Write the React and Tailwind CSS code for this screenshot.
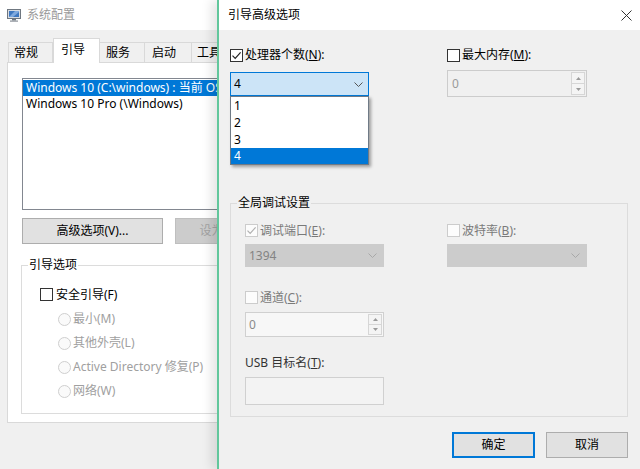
import React from "react";

function Check({ checked, disabled }) {
	return (
		<span
			className={
				disabled
					? "w-[13px] h-[13px] shrink-0 border border-[#cccccc] bg-[#fcfcfc] flex items-center justify-center"
					: "w-[13px] h-[13px] shrink-0 border border-[#333333] bg-white flex items-center justify-center"
			}
		>
			{checked && (
				<svg width="11" height="11" viewBox="0 0 11 11">
					<path
						d="M1.5 5.6 L4.2 8.4 L9.6 2.4"
						fill="none"
						stroke={disabled ? "#b0b0b0" : "#222222"}
						strokeWidth="1.2"
					/>
				</svg>
			)}
		</span>
	);
}

function Radio() {
	return (
		<span className="w-[13px] h-[13px] shrink-0 rounded-full border border-[#cfcfcf] bg-[#fafafa]" />
	);
}

function Chevron({ color }) {
	return (
		<svg width="9" height="5" viewBox="0 0 9 5">
			<path d="M0.5 0.5 L4.5 4.5 L8.5 0.5" fill="none" stroke={color} strokeWidth="1" />
		</svg>
	);
}

function Spin() {
	return (
		<div className="w-[15px] h-full flex flex-col py-[1px] pr-[1px]">
			<div className="flex-1 border border-[#d6d6d6] bg-[#f4f4f4] flex items-center justify-center">
				<svg width="5" height="3" viewBox="0 0 5 3">
					<path d="M0 3 L2.5 0 L5 3 Z" fill="#9a9a9a" />
				</svg>
			</div>
			<div className="flex-1 border border-t-0 border-[#d6d6d6] bg-[#f4f4f4] flex items-center justify-center">
				<svg width="5" height="3" viewBox="0 0 5 3">
					<path d="M0 0 L2.5 3 L5 0 Z" fill="#9a9a9a" />
				</svg>
			</div>
		</div>
	);
}

function AppIcon() {
	return (
		<svg width="14" height="13" viewBox="0 0 14 13">
			<rect x="0.5" y="0.5" width="13" height="9" fill="#d8dce2" stroke="#6f7780" />
			<rect x="2" y="2" width="10" height="6" fill="#3f78c0" />
			<path d="M2 8 L8 2 L12 2 L12 3 L6 8 Z" fill="#7fa9de" />
			<rect x="5" y="10" width="4" height="1.5" fill="#6f7780" />
			<rect x="3" y="11.5" width="8" height="1.2" fill="#8a9199" />
		</svg>
	);
}

function LeftWindow() {
	return (
		<div className="w-[217px] shrink-0 overflow-hidden bg-[#f0f0f0]">
			<div className="h-[30px] bg-white flex items-center pl-[7px]">
				<AppIcon />
				<span className="ml-[6px] text-[#9a9a9a]">系统配置</span>
			</div>
			<div className="pl-[7px] pt-[8px]">
				<div className="flex items-end h-[24px] pl-[1px] w-[420px]">
					<div className="w-[45px] h-[20px] pl-[5px] border border-b-0 border-[#d9d9d9] leading-[20px]">常规</div>
					<div className="relative z-10 -mb-px w-[47px] h-[25px] pl-[7px] bg-white border border-b-0 border-[#d9d9d9] leading-[22px]">引导</div>
					<div className="w-[45px] h-[20px] pl-[6px] border border-b-0 border-l-0 border-[#d9d9d9] leading-[20px]">服务</div>
					<div className="w-[47px] h-[20px] pl-[7px] border border-b-0 border-l-0 border-[#d9d9d9] leading-[20px]">启动</div>
					<div className="w-[60px] h-[20px] pl-[5px] border border-b-0 border-l-0 border-[#d9d9d9] leading-[20px]">工具</div>
				</div>
				<div className="w-[430px] h-[361px] bg-white border border-[#d9d9d9] pl-[14px] pt-[15px]">
					<div className="w-[400px] h-[132px] border border-[#828790] bg-white pt-[1px]">
						<div className="h-[16px] leading-[16px] pl-[3px] bg-[#0078d7] text-white whitespace-nowrap">
							Windows 10 (C:\windows) : 当前 OS; 默认 OS
						</div>
						<div className="h-[16px] leading-[16px] pl-[3px] whitespace-nowrap">
							Windows 10 Pro (\Windows)
						</div>
					</div>
					<div className="flex gap-[12px] mt-[8px]">
						<div className="w-[141px] h-[26px] bg-[#e1e1e1] border border-[#adadad] flex items-center justify-center">
							高级选项(V)...
						</div>
						<div className="w-[125px] h-[26px] bg-[#cccccc] border border-[#bfbfbf] text-[#a3a3a3] flex items-center justify-center whitespace-nowrap">
							设为默认值(D)
						</div>
					</div>
					<fieldset className="mt-[13px] -ml-px w-[420px] border border-[#dcdcdc]">
						<legend className="ml-[6px] px-[1px] leading-[16px]">引导选项</legend>
						<div className="pl-[18px] pt-[15px] pb-[10px]">
							<div className="flex items-center h-[13px] gap-[3px]">
								<Check />
								<span>安全引导(F)</span>
							</div>
							<div className="mt-[6px] pl-[18px] text-[#a0a0a0]">
								{["最小(M)", "其他外壳(L)", "Active Directory 修复(P)", "网络(W)"].map((t) => (
									<div key={t} className="h-[24px] flex items-center gap-[2px] whitespace-nowrap">
										<Radio />
										<span>{t}</span>
									</div>
								))}
							</div>
						</div>
					</fieldset>
				</div>
			</div>
		</div>
	);
}

function Dialog() {
	return (
		<div className="relative flex-1 bg-[#f0f0f0] border-l-2 border-[#62c79c] shadow-[-6px_0_10px_rgba(0,0,0,0.10)]">
			<div className="h-[30px] bg-white flex items-center justify-between pl-[9px] pr-[8px]">
				<span>引导高级选项</span>
				<svg width="11" height="11" viewBox="0 0 11 11">
					<path d="M0.5 0.5 L10.5 10.5 M10.5 0.5 L0.5 10.5" stroke="#333333" strokeWidth="1" />
				</svg>
			</div>
			<div className="pl-[11px] pr-[11px]">
				<div className="flex gap-[78px] pt-[18px]">
					<div className="w-[139px]">
						<div className="flex items-center h-[14px] gap-[2px]">
							<Check checked />
							<span>
								处理器个数(<u>N</u>):
							</span>
						</div>
						<div className="relative mt-[10px]">
							<div className="h-[24px] border border-[#0078d7] bg-[#cce4f7] flex items-center justify-between pl-[3px] pr-[5px]">
								<span>4</span>
								<Chevron color="#555555" />
							</div>
							<div className="absolute left-0 top-full z-20 w-full bg-white border border-[#6f7a86] shadow-[2px_2px_3px_rgba(0,0,0,0.35)]">
								{["1", "2", "3"].map((n) => (
									<div key={n} className="h-[17px] leading-[17px] pl-[3px]">
										{n}
									</div>
								))}
								<div className="h-[16px] leading-[16px] pl-[3px] bg-[#0078d7] text-white">4</div>
							</div>
						</div>
					</div>
					<div className="w-[140px]">
						<div className="flex items-center h-[14px] gap-[2px]">
							<Check />
							<span>
								最大内存(<u>M</u>):
							</span>
						</div>
						<div className="mt-[8px] h-[27px] border border-[#cccccc] bg-[#f0f0f0] flex items-center justify-between">
							<span className="pl-[4px] text-[#9a9a9a]">0</span>
							<Spin />
						</div>
					</div>
				</div>

				<fieldset className="mt-[98px] w-[398px] border border-[#dcdcdc]">
					<legend className="ml-[6px] px-[1px] leading-[16px]">全局调试设置</legend>
					<div className="pl-[14px] pt-[13px] pb-[11px]">
						<div className="flex gap-[63px]">
							<div className="w-[139px]">
								<div className="flex items-center h-[13px] gap-[2px] text-[#7a7a7a]">
									<Check checked disabled />
									<span>
										调试端口(<u>E</u>):
									</span>
								</div>
								<div className="mt-[7px] h-[23px] bg-[#cccccc] border border-[#cccccc] flex items-center justify-between pl-[3px] pr-[6px] text-[#838383]">
									<span>1394</span>
									<Chevron color="#a8a8a8" />
								</div>
							</div>
							<div className="w-[140px]">
								<div className="flex items-center h-[13px] gap-[2px] text-[#7a7a7a]">
									<Check disabled />
									<span>
										波特率(<u>B</u>):
									</span>
								</div>
								<div className="mt-[7px] h-[23px] bg-[#cccccc] border border-[#cccccc] flex items-center justify-end pr-[6px]">
									<Chevron color="#a8a8a8" />
								</div>
							</div>
						</div>
						<div className="w-[139px]">
							<div className="mt-[24px] flex items-center h-[13px] gap-[2px] text-[#7a7a7a]">
								<Check disabled />
								<span>
									通道(<u>C</u>):
								</span>
							</div>
							<div className="mt-[8px] h-[25px] border border-[#d0d0d0] bg-[#f7f7f7] flex items-center justify-between">
								<span className="pl-[3px] text-[#8a8a8a]">0</span>
								<Spin />
							</div>
							<div className="mt-[19px] h-[14px] flex items-center whitespace-nowrap text-[#333333]">
								USB 目标名(<u>T</u>):
							</div>
							<div className="mt-[7px] h-[28px] border border-[#d0d0d0] bg-[#f3f3f3]" />
						</div>
					</div>
				</fieldset>

				<div className="flex justify-end gap-[11px] mt-[15px] pr-[1px]">
					<div className="w-[83px] h-[26px] bg-[#e1e1e1] border-2 border-[#0078d7] flex items-center justify-center">确定</div>
					<div className="w-[82px] h-[26px] bg-[#e1e1e1] border border-[#adadad] flex items-center justify-center">取消</div>
				</div>
			</div>
		</div>
	);
}

export default function App() {
	return (
		<div className="w-[640px] h-[469px] overflow-hidden flex bg-[#f0f0f0] text-[12px] leading-[16px] text-black font-['Noto_Sans','Noto_Sans_CJK_SC',sans-serif]">
			<LeftWindow />
			<Dialog />
		</div>
	);
}
